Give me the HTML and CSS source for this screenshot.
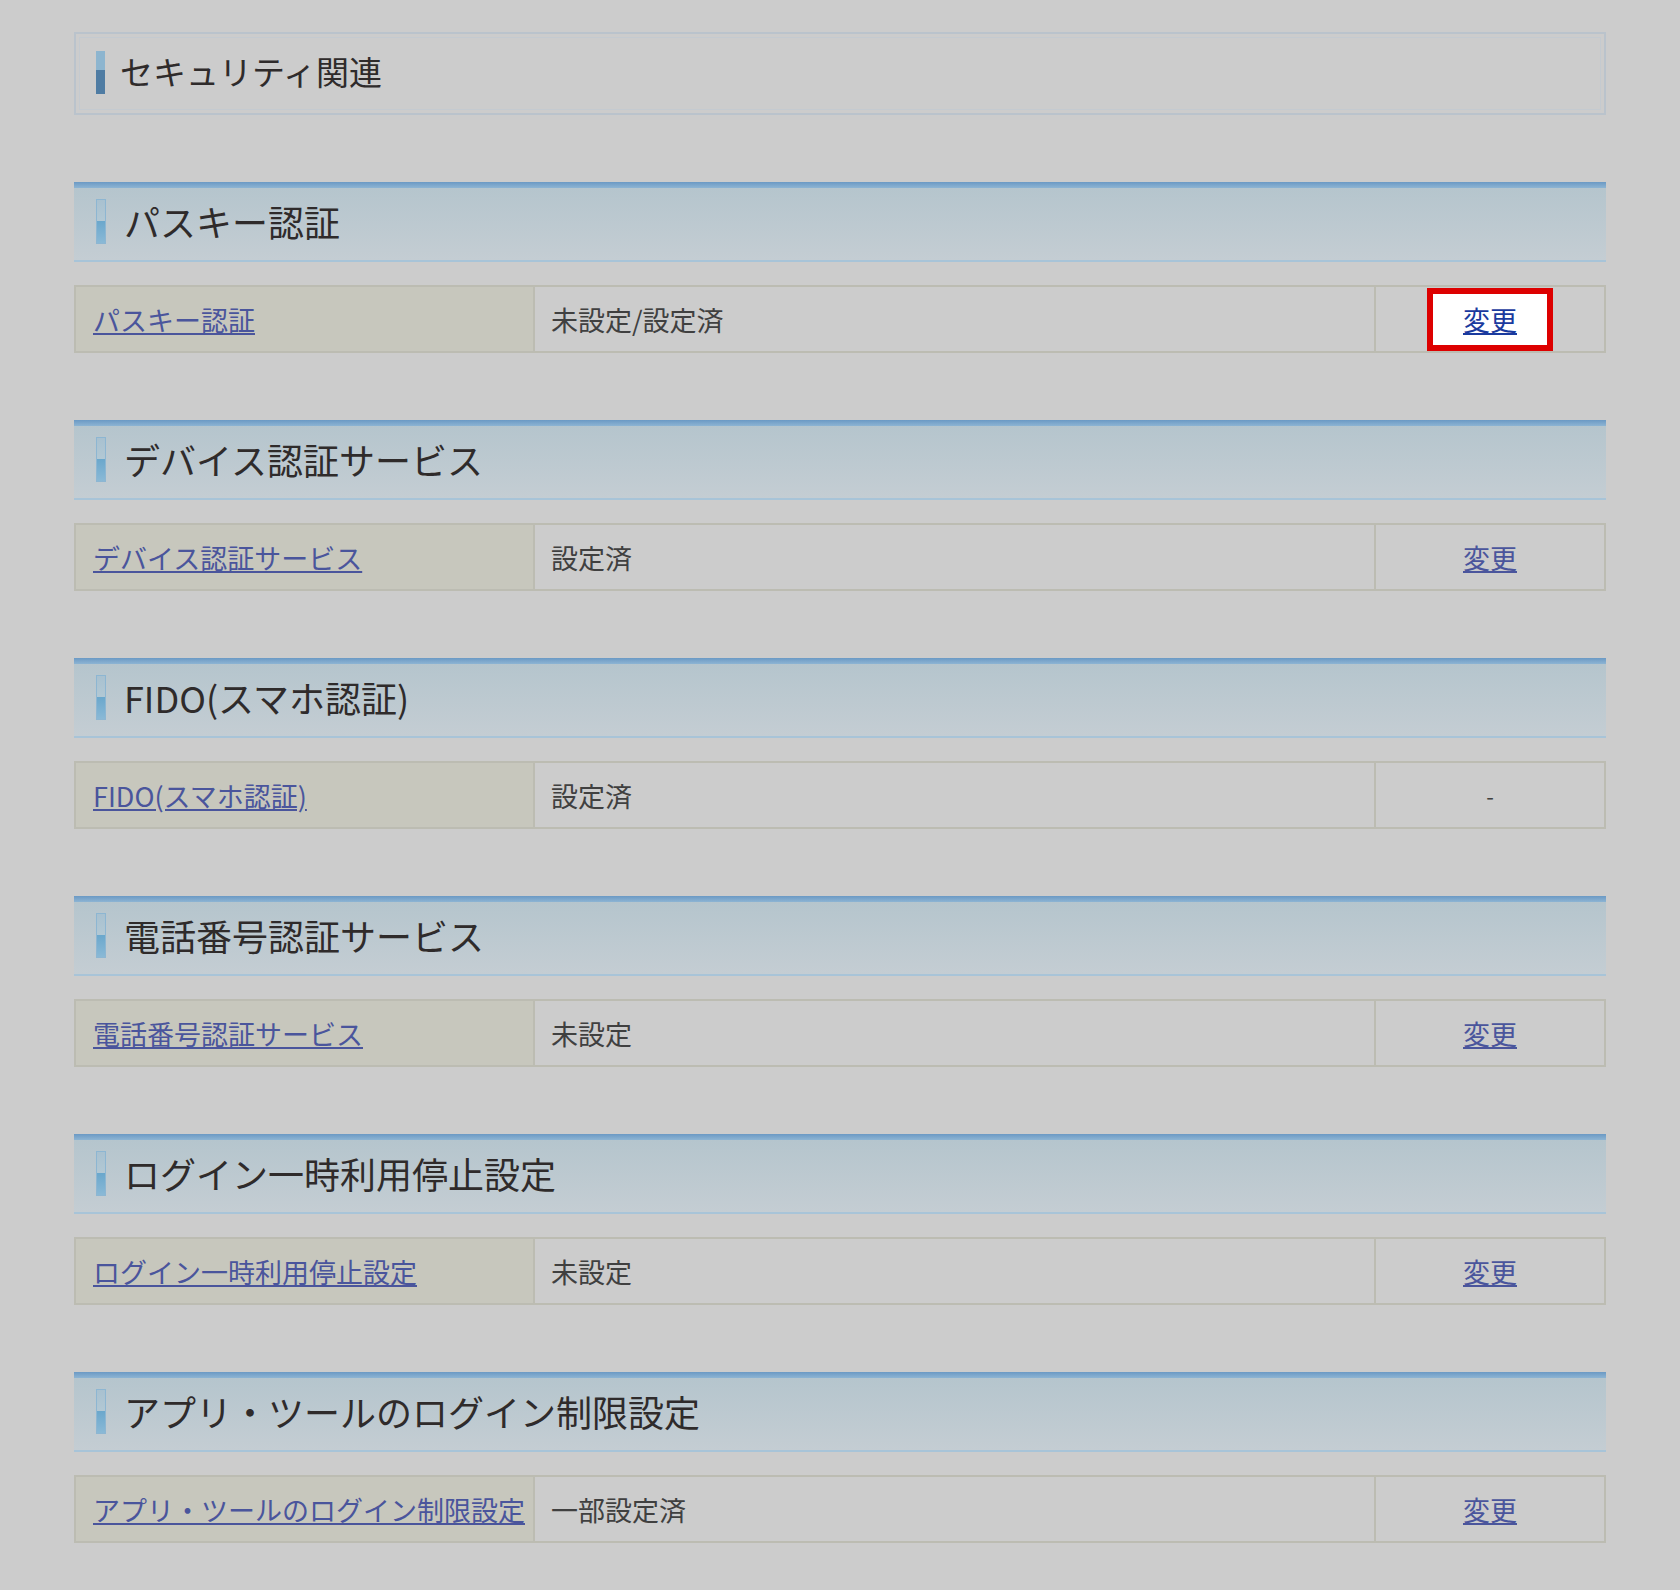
FILE: index.html
```html
<!DOCTYPE html>
<html lang="ja">
<head>
    <meta charset="UTF-8">
    <title>セキュリティ関連</title>
    <link rel="stylesheet" href="styles.css">
</head>
<body>

    <div class="page">
        <div class="page-title">
            <div class="page-title-inner">
                <span class="title-mark"></span>
                <h1>セキュリティ関連</h1>
            </div>
        </div>

        <div class="section">
            <h2 class="section-head"><span class="head-mark"></span>パスキー認証</h2>
            <div class="row">
                <div class="cell-label"><a href="#">パスキー認証</a></div>
                <div class="cell-value">未設定/設定済</div>
                <div class="cell-action">
                    <span class="highlight"><a href="#">変更</a></span>
                </div>
            </div>
        </div>

        <div class="section">
            <h2 class="section-head"><span class="head-mark"></span>デバイス認証サービス</h2>
            <div class="row">
                <div class="cell-label"><a href="#">デバイス認証サービス</a></div>
                <div class="cell-value">設定済</div>
                <div class="cell-action"><a href="#">変更</a></div>
            </div>
        </div>

        <div class="section">
            <h2 class="section-head"><span class="head-mark"></span>FIDO(スマホ認証)</h2>
            <div class="row">
                <div class="cell-label"><a href="#">FIDO(スマホ認証)</a></div>
                <div class="cell-value">設定済</div>
                <div class="cell-action"><span class="dash">-</span></div>
            </div>
        </div>

        <div class="section">
            <h2 class="section-head"><span class="head-mark"></span>電話番号認証サービス</h2>
            <div class="row">
                <div class="cell-label"><a href="#">電話番号認証サービス</a></div>
                <div class="cell-value">未設定</div>
                <div class="cell-action"><a href="#">変更</a></div>
            </div>
        </div>

        <div class="section">
            <h2 class="section-head"><span class="head-mark"></span>ログイン一時利用停止設定</h2>
            <div class="row">
                <div class="cell-label"><a href="#">ログイン一時利用停止設定</a></div>
                <div class="cell-value">未設定</div>
                <div class="cell-action"><a href="#">変更</a></div>
            </div>
        </div>

        <div class="section">
            <h2 class="section-head"><span class="head-mark"></span>アプリ・ツールのログイン制限設定</h2>
            <div class="row">
                <div class="cell-label"><a href="#">アプリ・ツールのログイン制限設定</a></div>
                <div class="cell-value">一部設定済</div>
                <div class="cell-action"><a href="#">変更</a></div>
            </div>
        </div>
    </div>

</body>
</html>
```

FILE: styles.css
```css
body {
    margin: 0;
    padding: 32px 0 0;
    background: #cccccc;
    font-family: "Noto Sans CJK JP", "Noto Sans", sans-serif;
    color: #3c3c3c;
}
.page {
    width: 1532px;
    margin-left: 74px;
}
.page-title {
    border: 2px solid #bac3cc;
    padding: 3px;
    box-sizing: border-box;
    height: 83px;
}
.page-title-inner {
    border: 1px solid #c4cad0;
    height: 100%;
    box-sizing: border-box;
    display: flex;
    align-items: center;
    padding-left: 16px;
}
.title-mark {
    width: 9px;
    height: 43px;
    background: linear-gradient(#8db5cf 0, #8db5cf 45%, #4f7ca3 45%, #4f7ca3 100%);
    margin-right: 15px;
    margin-bottom: 2px;
}
h1 {
    margin: 0 0 6px;
    font-size: 33px;
    font-weight: normal;
    color: #2f2b2b;
}
.section {
    margin-top: 67px;
}
.section-head {
    margin: 0;
    height: 80px;
    box-sizing: border-box;
    display: flex;
    align-items: center;
    padding-left: 22px;
    font-size: 36px;
    font-weight: normal;
    color: #2f2b2b;
    background: linear-gradient(#6b99c4 0, #8db4d3 6px, #b5c5cd 6px, #c4cdd3 100%);
    border-bottom: 2px solid #a8c4d8;
}
.head-mark {
    width: 8px;
    height: 43px;
    border: 1px solid #8db6d2;
    background: linear-gradient(#a8c1d0 0, #b2c8d4 48%, #6aa7cc 48%, #8ab9d6 100%);
    margin-right: 18px;
}
.row {
    margin-top: 23px;
    height: 68px;
    box-sizing: border-box;
    display: flex;
    border: 2px solid #bcbcb2;
    font-size: 27px;
}
.row a {
    color: #4a559c;
}
.cell-label {
    width: 459px;
    background: #c7c7bd;
    border-right: 2px solid #bcbcb2;
    display: flex;
    align-items: center;
    padding-left: 17px;
    box-sizing: border-box;
}
.cell-value {
    flex: 1;
    display: flex;
    align-items: center;
    padding-left: 16px;
    color: #404040;
}
.cell-action {
    width: 228px;
    border-left: 2px solid #bcbcb2;
    display: flex;
    align-items: center;
    justify-content: center;
}
.highlight {
    display: flex;
    align-items: center;
    justify-content: center;
    width: 126px;
    height: 63px;
    box-sizing: border-box;
    border: 6px solid #dd0000;
    background: #ffffff;
}
.row .highlight a {
    color: #1a3a9e;
}
.dash {
    color: #404040;
    font-size: 22px;
}
```
